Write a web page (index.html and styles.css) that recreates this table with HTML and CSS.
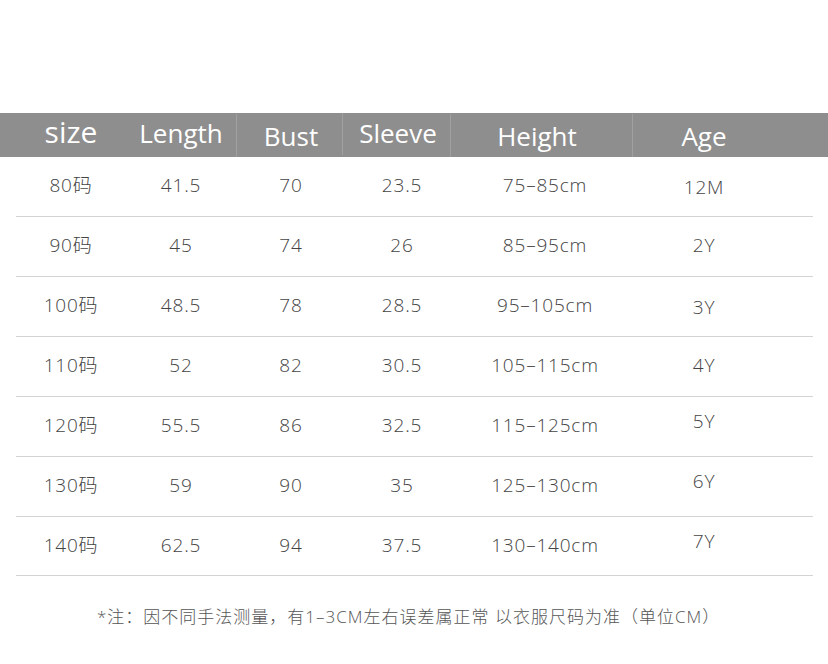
FILE: index.html
```html
<!DOCTYPE html>
<html lang="zh">
<head>
<meta charset="utf-8">
<link rel="stylesheet" href="styles.css">
</head>
<body>
<div class="page">
  <div class="head">
    <div class="hc size">size</div>
    <div class="hc">Length</div>
    <div class="hc sep hc-down">Bust</div>
    <div class="hc sep sleeve">Sleeve</div>
    <div class="hc sep hc-down height">Height</div>
    <div class="hc sep hc-down">Age</div>
  </div>
  <div class="body">
    <div class="row"><div>80码</div><div>41.5</div><div>70</div><div>23.5</div><div>75–85cm</div><div class="age">12M</div></div>
    <div class="row"><div>90码</div><div>45</div><div>74</div><div>26</div><div>85–95cm</div><div class="age up">2Y</div></div>
    <div class="row"><div>100码</div><div>48.5</div><div>78</div><div>28.5</div><div>95–105cm</div><div class="age">3Y</div></div>
    <div class="row"><div>110码</div><div>52</div><div>82</div><div>30.5</div><div>105–115cm</div><div class="age up">4Y</div></div>
    <div class="row"><div>120码</div><div>55.5</div><div>86</div><div>32.5</div><div>115–125cm</div><div class="age up2">5Y</div></div>
    <div class="row"><div>130码</div><div>59</div><div>90</div><div>35</div><div>125–130cm</div><div class="age up2">6Y</div></div>
    <div class="row last"><div>140码</div><div>62.5</div><div>94</div><div>37.5</div><div>130–140cm</div><div class="age up2">7Y</div></div>
  </div>
  <p class="note">*注：因不同手法测量，有1–3CM左右误差属正常 以衣服尺码为准（单位CM）</p>
</div>
</body>
</html>
```
FILE: styles.css
```css
html, body {
  margin: 0;
  padding: 0;
  background: #ffffff;
}
.page {
  width: 828px;
  height: 664px;
  padding-top: 113px;
  box-sizing: border-box;
  font-family: "Open Sans", "Noto Sans", "Noto Sans CJK SC", sans-serif;
}
.head {
  height: 44px;
  background: #8e8e8e;
  display: grid;
  grid-template-columns: 110px 110px 110px 112px 174px 144px;
  padding-left: 16px;
  color: #ffffff;
  font-size: 26px;
  line-height: 44px;
}
.hc {
  text-align: center;
  position: relative;
  top: -2px;
}
.size {
  font-size: 30px;
  top: -3px;
}
.hc-down {
  top: 1px;
}
.sleeve {
  left: -4px;
}
.height {
  left: -8px;
}
.sep {
  box-shadow: inset 1px 0 0 rgba(255,255,255,0.16);
}
.body {
  margin: 0 15px 0 16px;
}
.row {
  display: grid;
  grid-template-columns: 110px 110px 110px 112px 174px 144px;
  height: 59px;
  border-bottom: 1px solid #d4d4d4;
  font-size: 19px;
  font-weight: 300;
  letter-spacing: 0.8px;
  line-height: 59px;
  color: #444444;
}
.row.last {
  height: 58px;
  line-height: 58px;
}
.row > div {
  text-align: center;
  position: relative;
  top: -1px;
}
.row > .age {
  top: 1px;
}
.row > .age.up {
  top: -1px;
}
.row > .age.up2 {
  top: -5px;
}
.note {
  margin: 27px 0 0 97px;
  font-size: 17px;
  letter-spacing: 1px;
  font-weight: 300;
  color: #555555;
}
```
